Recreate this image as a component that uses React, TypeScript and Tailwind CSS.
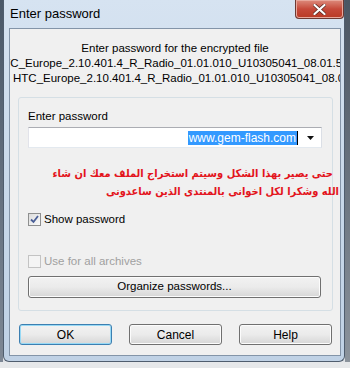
const ui = { fontFamily: '"Liberation Sans", Arial, sans-serif' };
const arabic = { fontFamily: '"DejaVu Sans", sans-serif', fontStretch: "condensed" };

const Check = ({ checked, disabled }: { checked?: boolean; disabled?: boolean }) => (
  <span
    className={
      "flex h-[13px] w-[13px] shrink-0 items-center justify-center border " +
      (disabled
        ? "border-[#c3c3c3] bg-[#f4f4f4]"
        : "border-[#8e8f8f] bg-gradient-to-br from-[#dcdcdc] to-[#fbfbfb]")
    }
  >
    {checked && (
      <svg width="9" height="9" viewBox="0 0 9 9">
        <path d="M1 4.5 L3.5 7 L8 1" fill="none" stroke="#4a5f97" strokeWidth="1.8" />
      </svg>
    )}
  </span>
);

const Button = ({ label, focused }: { label: string; focused?: boolean }) => (
  <button
    className={
      "h-[21px] w-[93px] rounded-[3px] border bg-gradient-to-b from-[#f2f2f2] via-[#ebebeb] to-[#d6d6d6] text-[12px] leading-none text-black " +
      (focused
        ? "border-[#3c7fb1] shadow-[inset_0_0_0_1px_#97d9f5]"
        : "border-[#707070] shadow-[inset_0_0_0_1px_#fcfcfc]")
    }
  >
    {label}
  </button>
);

export default function App() {
  return (
    <div className="flex h-[368px] w-[350px] flex-col overflow-hidden bg-[#dfe2e6]" style={ui}>
      <div className="flex h-[362px]">
        <div className="w-[3px] bg-gradient-to-b from-[#4a5868] to-[#7d8794]" />
        <div className="flex w-[342px] flex-col rounded-b-[6px] border border-t-0 border-[#4f5d6e] bg-gradient-to-b from-[#d6e3f1] via-[#c9d9ea] to-[#bfd1e5]">
          <div className="flex h-[28px] items-start justify-between">
            <span className="pl-[6px] pt-[6px] text-[13px] leading-[16px] text-black">Enter password</span>
            <div className="flex h-[19px] w-[49px] items-center justify-center rounded-b-[4px] border border-t-0 border-[#6d3a33] bg-gradient-to-b from-[#dc8a7c] via-[#c6493a] to-[#b83a24] shadow-[inset_0_0_0_1px_#e8a89c]">
              <svg width="13" height="11" viewBox="0 0 13 11">
                <path d="M1.5 1 L11.5 10 M11.5 1 L1.5 10" stroke="#5a2a22" strokeWidth="3.6" strokeLinecap="round" />
                <path d="M1.5 1 L11.5 10 M11.5 1 L1.5 10" stroke="#fff" strokeWidth="2.2" strokeLinecap="round" />
              </svg>
            </div>
          </div>
          <div className="ml-[5px] flex h-[328px] w-[332px] flex-col border border-[#8394a8] bg-[#f0f0f0]">
            <div className="pt-[12px] text-center text-[11.5px] leading-[15px] text-black">
              Enter password for the encrypted file
            </div>
            <div className="overflow-hidden whitespace-nowrap text-[11.5px] leading-[15px] text-black">
              <div className="ml-[-15px]">HTC_Europe_2.10.401.4_R_Radio_01.01.010_U10305041_08.01.50515_2</div>
              <div className="ml-[3px]">HTC_Europe_2.10.401.4_R_Radio_01.01.010_U10305041_08.01.50515_2</div>
            </div>
            <div className="ml-[8px] mt-[11px] flex h-[214px] w-[315px] flex-col rounded-[3px] border border-[#d5dfe5] px-[9px]">
              <div className="pt-[11px] text-[11.5px] leading-[15px] text-black">Enter password</div>
              <div className="mt-[3px] flex h-[21px] w-[294px] items-center border border-[#abadb3] border-b-[#e3e9ef] border-l-[#e2e3ea] border-r-[#dbdfe6] bg-white">
                <div className="flex flex-1 justify-end pr-[1px]">
                  <span className="bg-[#3399ff] px-[1px] text-[12px] leading-[14px] text-white">www.gem-flash.com</span>
                  <span className="h-[14px] w-px bg-black" />
                </div>
                <div className="flex w-[22px] justify-center">
                  <svg width="7" height="4" viewBox="0 0 7 4">
                    <path d="M0 0 H7 L3.5 4 Z" fill="#111" />
                  </svg>
                </div>
              </div>
              <div
                dir="rtl"
                className="mr-[-16px] mt-[17px] whitespace-nowrap text-right text-[11px] font-bold leading-[18px] text-[#e3141c]"
                style={arabic}
              >
                <div className="mr-[6px]">حتى يصير بهذا الشكل وسيتم استخراج الملف معك ان شاء</div>
                <div>الله  وشكرا لكل اخوانى بالمنتدى الذين ساعدونى</div>
              </div>
              <label className="mt-[11px] flex items-center gap-[3px] text-[11.5px] leading-[15px] text-black">
                <Check checked />
                Show password
              </label>
              <label className="mt-[27px] flex items-center gap-[3px] text-[11.5px] leading-[15px] text-[#a0a0a0]">
                <Check disabled />
                Use for all archives
              </label>
              <button className="mt-[7px] h-[22px] w-[293px] rounded-[3px] border border-[#707070] bg-gradient-to-b from-[#f2f2f2] via-[#ebebeb] to-[#d6d6d6] text-[11.5px] leading-none text-black shadow-[inset_0_0_0_1px_#fcfcfc]">
                Organize passwords...
              </button>
            </div>
            <div className="ml-[9px] mt-[13px] flex gap-[17px]">
              <Button label="OK" focused />
              <Button label="Cancel" />
              <Button label="Help" />
            </div>
          </div>
        </div>
        <div className="w-[5px] bg-gradient-to-b from-[#4b5663] to-[#8b939c]" />
      </div>
      <div className="flex-1 bg-[#e6e8ea]" />
    </div>
  );
}
